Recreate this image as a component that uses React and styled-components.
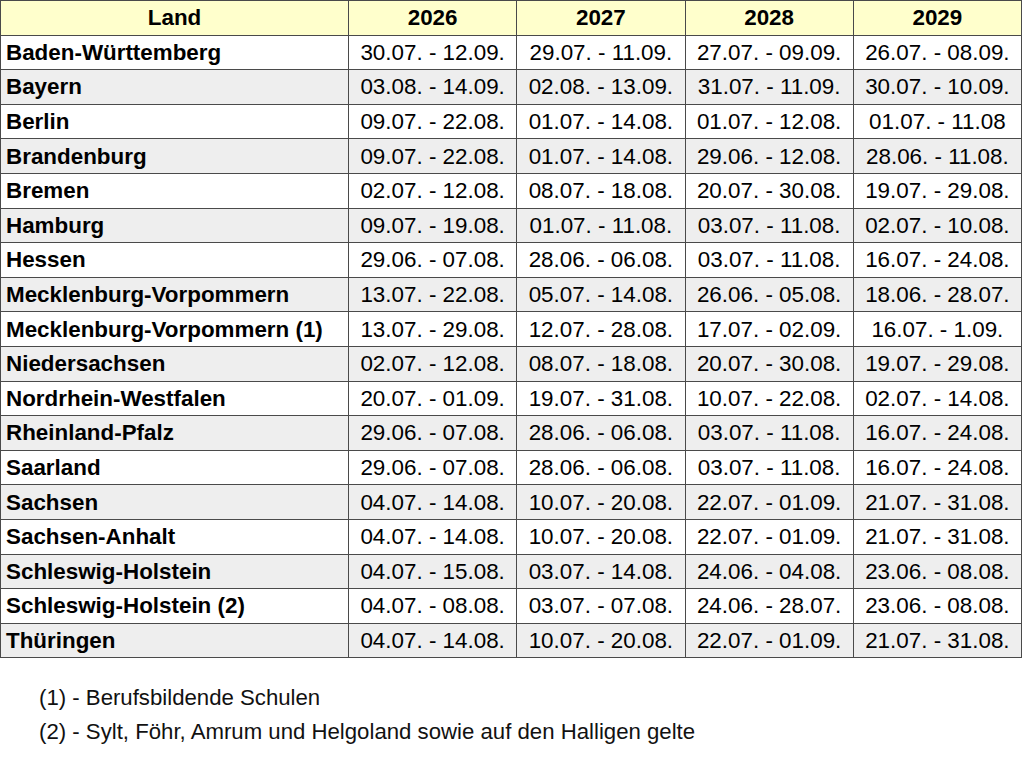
import React from "react";
import styled, { createGlobalStyle } from "styled-components";

const GlobalStyle = createGlobalStyle`
  body {
    margin: 0;
    background: #fff;
    font-family: "Liberation Sans", Arial, sans-serif;
    color: #000;
  }
`;

const Page = styled.div`
  width: 1024px;
  padding: 0 2px 0 0;
  box-sizing: border-box;
`;

const Table = styled.table`
  width: 1022px;
  border-collapse: collapse;
  table-layout: fixed;
  font-size: 22.4px;
  line-height: 26px;
`;

const Th = styled.th`
  height: 32.6px;
  padding: 1px 0 0;
  border: 1px solid #4a4a4a;
  background: #ffffcc;
  font-weight: bold;
  text-align: center;
  width: ${(p) => p.$w || "auto"};
`;

const Row = styled.tr`
  background: ${(p) => (p.$alt ? "#eeeeee" : "#ffffff")};
`;

const Name = styled.td`
  height: 32.6px;
  padding: 1px 0 0 5px;
  border: 1px solid #4a4a4a;
  font-weight: bold;
  text-align: left;
  white-space: nowrap;
`;

const Cell = styled.td`
  padding: 1px 0 0;
  border: 1px solid #4a4a4a;
  text-align: center;
  white-space: nowrap;
`;

const Notes = styled.div`
  padding: 23px 0 0 39px;
  font-size: 22.2px;
  line-height: 34px;
  color: #111;
`;

const data = [
  ["Baden-Württemberg", "30.07. - 12.09.", "29.07. - 11.09.", "27.07. - 09.09.", "26.07. - 08.09."],
  ["Bayern", "03.08. - 14.09.", "02.08. - 13.09.", "31.07. - 11.09.", "30.07. - 10.09."],
  ["Berlin", "09.07. - 22.08.", "01.07. - 14.08.", "01.07. - 12.08.", "01.07. - 11.08"],
  ["Brandenburg", "09.07. - 22.08.", "01.07. - 14.08.", "29.06. - 12.08.", "28.06. - 11.08."],
  ["Bremen", "02.07. - 12.08.", "08.07. - 18.08.", "20.07. - 30.08.", "19.07. - 29.08."],
  ["Hamburg", "09.07. - 19.08.", "01.07. - 11.08.", "03.07. - 11.08.", "02.07. - 10.08."],
  ["Hessen", "29.06. - 07.08.", "28.06. - 06.08.", "03.07. - 11.08.", "16.07. - 24.08."],
  ["Mecklenburg-Vorpommern", "13.07. - 22.08.", "05.07. - 14.08.", "26.06. - 05.08.", "18.06. - 28.07."],
  ["Mecklenburg-Vorpommern (1)", "13.07. - 29.08.", "12.07. - 28.08.", "17.07. - 02.09.", "16.07. - 1.09."],
  ["Niedersachsen", "02.07. - 12.08.", "08.07. - 18.08.", "20.07. - 30.08.", "19.07. - 29.08."],
  ["Nordrhein-Westfalen", "20.07. - 01.09.", "19.07. - 31.08.", "10.07. - 22.08.", "02.07. - 14.08."],
  ["Rheinland-Pfalz", "29.06. - 07.08.", "28.06. - 06.08.", "03.07. - 11.08.", "16.07. - 24.08."],
  ["Saarland", "29.06. - 07.08.", "28.06. - 06.08.", "03.07. - 11.08.", "16.07. - 24.08."],
  ["Sachsen", "04.07. - 14.08.", "10.07. - 20.08.", "22.07. - 01.09.", "21.07. - 31.08."],
  ["Sachsen-Anhalt", "04.07. - 14.08.", "10.07. - 20.08.", "22.07. - 01.09.", "21.07. - 31.08."],
  ["Schleswig-Holstein", "04.07. - 15.08.", "03.07. - 14.08.", "24.06. - 04.08.", "23.06. - 08.08."],
  ["Schleswig-Holstein (2)", "04.07. - 08.08.", "03.07. - 07.08.", "24.06. - 28.07.", "23.06. - 08.08."],
  ["Thüringen", "04.07. - 14.08.", "10.07. - 20.08.", "22.07. - 01.09.", "21.07. - 31.08."],
];

export default function App() {
  return (
    <Page>
      <GlobalStyle />
      <Table>
        <thead>
          <tr>
            <Th $w="347px">Land</Th>
            <Th>2026</Th>
            <Th>2027</Th>
            <Th>2028</Th>
            <Th>2029</Th>
          </tr>
        </thead>
        <tbody>
          {data.map((r, i) => (
            <Row key={r[0]} $alt={i % 2 === 1}>
              <Name>{r[0]}</Name>
              {r.slice(1).map((d, j) => (
                <Cell key={j}>{d}</Cell>
              ))}
            </Row>
          ))}
        </tbody>
      </Table>
      <Notes>
        <div>(1) - Berufsbildende Schulen</div>
        <div>(2) - Sylt, Föhr, Amrum und Helgoland sowie auf den Halligen gelte</div>
      </Notes>
    </Page>
  );
}
